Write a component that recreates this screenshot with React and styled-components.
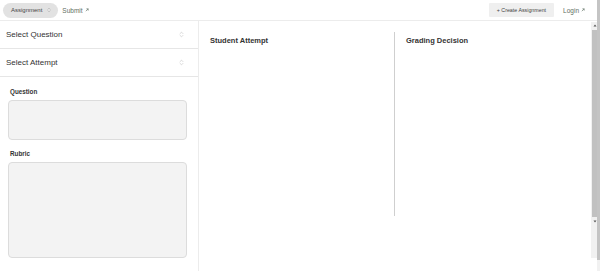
import React from 'react'
import styled, { createGlobalStyle } from 'styled-components'
import { ChevronsUpDown } from 'lucide-react'

const Global = createGlobalStyle`
  * {
    box-sizing: border-box;
  }
  body {
    margin: 0;
    font-family: 'Liberation Sans', Arial, sans-serif;
    color: #333;
    background: #fff;
    overflow: hidden;
  }
`

const Arrow = () => (
  <svg width="4" height="4" viewBox="0 0 10 10" fill="none" stroke="currentColor" strokeWidth="1.6">
    <path d="M2 8 L8 2 M3.5 2 H8 V6.5" />
  </svg>
)

const Caret = ({ up }) => (
  <svg width="4" height="3" viewBox="0 0 8 6" fill="#555">
    <path d={up ? 'M4 1 L7 5 H1 Z' : 'M1 1 H7 L4 5 Z'} />
  </svg>
)

const App = () => {
  return (
    <Page>
      <Global />
      <Content>
        <Header>
          <NavLeft>
            <Pill>
              Assignment
              <ChevronsUpDown size={6} strokeWidth={1.5} color="#999" />
            </Pill>
            <NavLink>
              Submit <Arrow />
            </NavLink>
          </NavLeft>
          <NavRight>
            <CreateButton>+ Create Assignment</CreateButton>
            <NavLink>
              Login <Arrow />
            </NavLink>
          </NavRight>
        </Header>
        <Body>
          <Sidebar>
            <SelectRow>
              Select Question
              <ChevronsUpDown size={7} strokeWidth={1.5} color="#aaa" />
            </SelectRow>
            <SelectRow>
              Select Attempt
              <ChevronsUpDown size={7} strokeWidth={1.5} color="#aaa" />
            </SelectRow>
            <Form>
              <Label>Question</Label>
              <Area height={40} />
              <Label spaced>Rubric</Label>
              <Area height={96} />
            </Form>
          </Sidebar>
          <Main>
            <Columns>
              <Column divided>
                <Heading>Student Attempt</Heading>
              </Column>
              <Column>
                <Heading>Grading Decision</Heading>
              </Column>
            </Columns>
            <ScrollTrack>
              <Caret up />
              <Thumb />
              <Caret />
            </ScrollTrack>
          </Main>
        </Body>
      </Content>
      <PageBar />
    </Page>
  )
}

const Page = styled.div`
  height: 100vh;
  display: flex;
`

const Content = styled.div`
  flex: 1;
  display: flex;
  flex-direction: column;
  min-width: 0;
`

const PageBar = styled.div`
  width: 3px;
  flex-shrink: 0;
  background: linear-gradient(#c4c4c4 0 96%, #f1f1f1 96%);
`

const Header = styled.div`
  height: 21px;
  flex-shrink: 0;
  display: flex;
  align-items: center;
  justify-content: space-between;
  padding: 0 12px 0 3px;
  border-bottom: 1px solid #ececec;
`

const NavLeft = styled.div`
  display: flex;
  align-items: center;
  gap: 4px;
`

const NavRight = styled.div`
  display: flex;
  align-items: center;
  gap: 9px;
`

const Pill = styled.div`
  display: flex;
  align-items: center;
  gap: 4px;
  height: 15px;
  padding: 0 6px 0 8px;
  border-radius: 8px;
  background: #e2e2e2;
  font-size: 6px;
  color: #444;
`

const NavLink = styled.div`
  display: flex;
  align-items: center;
  gap: 2px;
  font-size: 6.5px;
  color: #5f6f63;
`

const CreateButton = styled.div`
  height: 14px;
  padding: 0 8px;
  display: flex;
  align-items: center;
  background: #efefef;
  border-radius: 1px;
  font-size: 5.3px;
  color: #444;
`

const Body = styled.div`
  flex: 1;
  display: flex;
  min-height: 0;
`

const Sidebar = styled.div`
  width: 199px;
  flex-shrink: 0;
  border-right: 1px solid #ececec;
  display: flex;
  flex-direction: column;
`

const SelectRow = styled.div`
  height: 28px;
  display: flex;
  align-items: center;
  justify-content: space-between;
  padding: 0 13px 0 6px;
  border-bottom: 1px solid #e6e6e6;
  font-size: 8px;
  color: #333;
`

const Form = styled.div`
  display: flex;
  flex-direction: column;
  padding: 9px 11px 0 8px;
`

const Label = styled.div`
  font-size: 6.3px;
  font-weight: bold;
  color: #333;
  padding-left: 2px;
  margin: ${(p) => (p.spaced ? '10px' : '2px')} 0 5px;
`

const Area = styled.div`
  height: ${(p) => p.height}px;
  background: #f3f3f3;
  border: 1px solid #dcdcdc;
  border-radius: 4px;
`

const Main = styled.div`
  flex: 1;
  display: flex;
  padding-top: 1px;
  padding-bottom: 13px;
`

const Columns = styled.div`
  flex: 1;
  display: flex;
  padding-top: 10px;
`

const Column = styled.div`
  width: 196px;
  padding: 4px 11px;
  height: 184px;
  border-right: ${(p) => (p.divided ? '1px solid #cfcfcf' : 'none')};
`

const Heading = styled.div`
  font-size: 7.5px;
  font-weight: bold;
  color: #333;
`

const ScrollTrack = styled.div`
  width: 8px;
  background: #f1f1f1;
  display: flex;
  flex-direction: column;
  align-items: center;
  padding: 2px 1px;
  gap: 3px;
`

const Thumb = styled.div`
  width: 6px;
  height: 187px;
  background: #c1c1c1;
`

export default App
